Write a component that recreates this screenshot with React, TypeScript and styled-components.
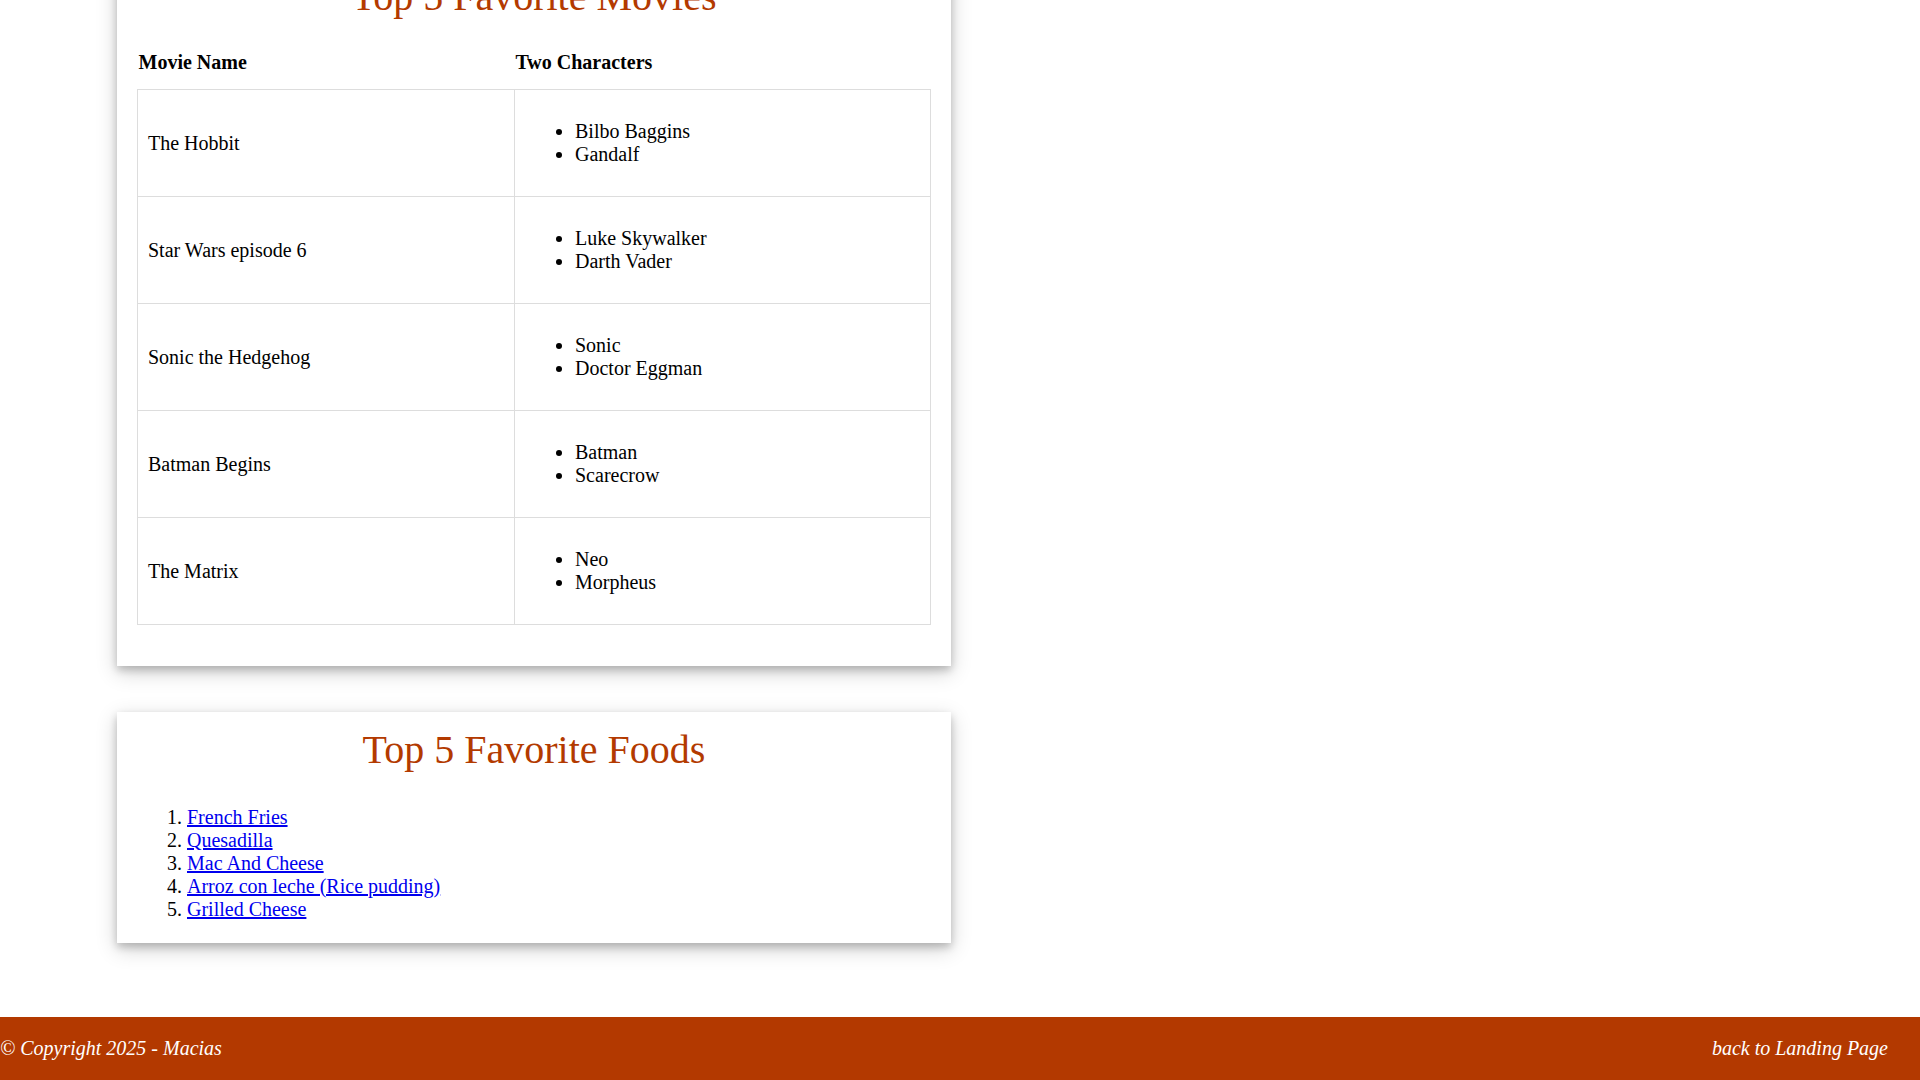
import React, { useLayoutEffect } from "react";
import styled, { createGlobalStyle } from "styled-components";

const GlobalStyle = createGlobalStyle`
  html {
    overflow-y: scroll;
  }
  body {
    margin: 0;
    background: #ffffff;
    color: #000000;
    font-family: "Liberation Serif", "Times New Roman", serif;
    font-size: 20px;
  }
`;

const Page = styled.div`
  display: flex;
  flex-direction: column;
  min-height: 100vh;
`;

const Header = styled.header`
  background: #b33900;
  color: #ffffff;
  height: 215px;
  display: flex;
  align-items: center;
  justify-content: center;
  margin-bottom: 46px;
`;

const SiteTitle = styled.h1`
  margin: 0;
  font-size: 48px;
  font-weight: normal;
  font-style: italic;
`;

const Main = styled.main`
  display: flex;
  flex-direction: column;
  align-items: flex-start;
  gap: 46px;
  padding-left: 117px;
`;

const Card = styled.section`
  width: 834px;
  box-sizing: border-box;
  background: #ffffff;
  padding: 14px 20px 0;
  box-shadow: 0 4px 8px 0 rgba(0, 0, 0, 0.2), 0 6px 20px 0 rgba(0, 0, 0, 0.19);
`;

const CardTitle = styled.h2`
  margin: 0 0 16px;
  font-size: 40px;
  font-weight: normal;
  color: #b33a00;
  text-align: center;
`;

const Table = styled.table`
  width: 100%;
  border-collapse: collapse;
  margin-bottom: 41px;
`;

const HeadCell = styled.th<{ $width?: string }>`
  text-align: left;
  font-weight: bold;
  padding: 15px 1px;
  width: ${(p) => p.$width ?? "auto"};
`;

const Cell = styled.td`
  border: 1px solid #dddddd;
  padding: 10px;
  vertical-align: middle;
`;

const CharList = styled.ul`
  margin: 20px 0;
  padding-left: 50px;
`;

const FoodList = styled.ol`
  margin: 33px 0 22px;
  padding-left: 50px;
`;

const FoodLink = styled.a`
  color: #0000ee;
  text-decoration: underline;
`;

const Footer = styled.footer`
  margin-top: 74px;
  background: #b33900;
  color: #ffffff;
  font-style: italic;
  display: flex;
  justify-content: space-between;
  align-items: center;
  padding: 20px 32px 20px 0;
`;

const FooterText = styled.span`
  line-height: 23px;
`;

const FooterLink = styled.a`
  color: #ffffff;
  text-decoration: none;
  line-height: 23px;
`;

const movies = [
  { name: "The Hobbit", chars: ["Bilbo Baggins", "Gandalf"] },
  { name: "Star Wars episode 6", chars: ["Luke Skywalker", "Darth Vader"] },
  { name: "Sonic the Hedgehog", chars: ["Sonic", "Doctor Eggman"] },
  { name: "Batman Begins", chars: ["Batman", "Scarecrow"] },
  { name: "The Matrix", chars: ["Neo", "Morpheus"] },
];

const foods = [
  "French Fries",
  "Quesadilla",
  "Mac And Cheese",
  "Arroz con leche (Rice pudding)",
  "Grilled Cheese",
];

export default function App() {
  useLayoutEffect(() => {
    const go = () =>
      window.scrollTo(0, document.documentElement.scrollHeight);
    go();
    requestAnimationFrame(go);
  }, []);

  return (
    <>
      <GlobalStyle />
      <Page>
        <Header>
          <SiteTitle>Macias' Favorites</SiteTitle>
        </Header>
        <Main>
          <Card>
            <CardTitle>Top 5 Favorite Movies</CardTitle>
            <Table>
              <thead>
                <tr>
                  <HeadCell $width="375px">Movie Name</HeadCell>
                  <HeadCell>Two Characters</HeadCell>
                </tr>
              </thead>
              <tbody>
                {movies.map((m) => (
                  <tr key={m.name}>
                    <Cell>{m.name}</Cell>
                    <Cell>
                      <CharList>
                        {m.chars.map((c) => (
                          <li key={c}>{c}</li>
                        ))}
                      </CharList>
                    </Cell>
                  </tr>
                ))}
              </tbody>
            </Table>
          </Card>
          <Card>
            <CardTitle>Top 5 Favorite Foods</CardTitle>
            <FoodList>
              {foods.map((f) => (
                <li key={f}>
                  <FoodLink href="#">{f}</FoodLink>
                </li>
              ))}
            </FoodList>
          </Card>
        </Main>
        <Footer>
          <FooterText>© Copyright 2025 - Macias</FooterText>
          <FooterLink href="#">back to Landing Page</FooterLink>
        </Footer>
      </Page>
    </>
  );
}
